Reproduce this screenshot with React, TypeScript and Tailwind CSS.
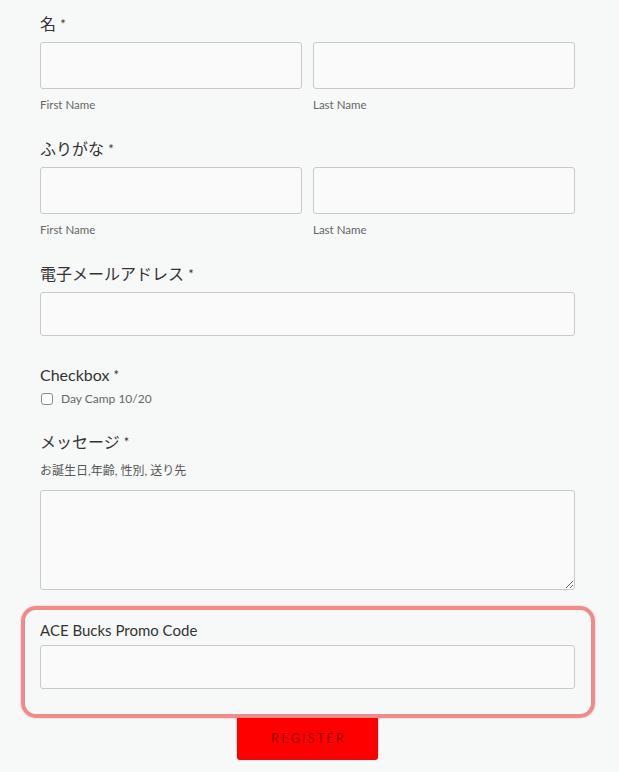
import React from "react";

const font = "font-['Lato','Noto_Sans_CJK_JP',sans-serif]";

function Label({ text }: { text: string }) {
  return (
    <div className="h-6 leading-6 text-[16px] text-[#333]">
      {text} <span className="text-[13px] align-top">*</span>
    </div>
  );
}

function Field({ h = "h-[47px]" }: { h?: string }) {
  return (
    <input
      type="text"
      className={`block w-full ${h} bg-[#fafafa] border border-[#c9c9c9] rounded-[3px] outline-none`}
    />
  );
}

function NameRow({ label, top }: { label: string; top: string }) {
  return (
    <div className={top}>
      <Label text={label} />
      <div className="mt-[6px] grid grid-cols-2 gap-[11px]">
        <div>
          <Field />
          <div className="mt-[7px] leading-[18px] text-[11.5px] text-[#666]">First Name</div>
        </div>
        <div>
          <Field />
          <div className="mt-[7px] leading-[18px] text-[11.5px] text-[#666]">Last Name</div>
        </div>
      </div>
    </div>
  );
}

export default function App() {
  return (
    <main className={`min-h-screen bg-[#f7f9f9] pl-[40px] pr-[44px] pt-[12px] ${font}`}>
      <NameRow label="名" top="" />
      <NameRow label="ふりがな" top="mt-[23px]" />

      {/* Email */}
      <div className="mt-[23px]">
        <Label text="電子メールアドレス" />
        <div className="mt-[6px]">
          <Field h="h-[44px]" />
        </div>
      </div>

      {/* Checkbox */}
      <div className="mt-[27px]">
        <Label text="Checkbox" />
        <label className="mt-[2px] flex items-center h-5 gap-[8px]">
          <span className="w-[12px] h-[12px] ml-[1px] rounded-[3px] border border-[#8a8a8a] bg-white" />
          <span className="text-[12px] text-[#666]">Day Camp 10/20</span>
        </label>
      </div>

      {/* Message */}
      <div className="mt-[21px]">
        <Label text="メッセージ" />
        <div className="mt-[8px] leading-[18px] text-[12px] text-[#555]">お誕生日,年齢, 性別, 送り先</div>
        <textarea className="block mt-[10px] w-full h-[100px] bg-[#fafafa] border border-[#c9c9c9] rounded-[3px] outline-none" />
      </div>

      {/* Promo code, highlighted */}
      <div className="mt-[16px] -ml-[19px] -mr-[20px] border-[4px] border-[#ef8b8b] rounded-[15px] pl-[15px] pr-[16px] pt-[8px] pb-[25px] shadow-[0_0_2px_#f3a5a5]">
        <div className="h-6 leading-6 text-[15px] text-[#333]">ACE Bucks Promo Code</div>
        <div className="mt-[3px]">
          <Field h="h-[44px]" />
        </div>
      </div>

      <div className="flex justify-center">
        <button
          type="button"
          className="w-[141px] h-[41px] bg-[#ff0000] rounded-b-[3px] shadow-[0_1px_1px_#b80000] text-[13px] tracking-[2px] text-[#990000] pl-[2px]"
        >
          REGISTER
        </button>
      </div>
    </main>
  );
}
